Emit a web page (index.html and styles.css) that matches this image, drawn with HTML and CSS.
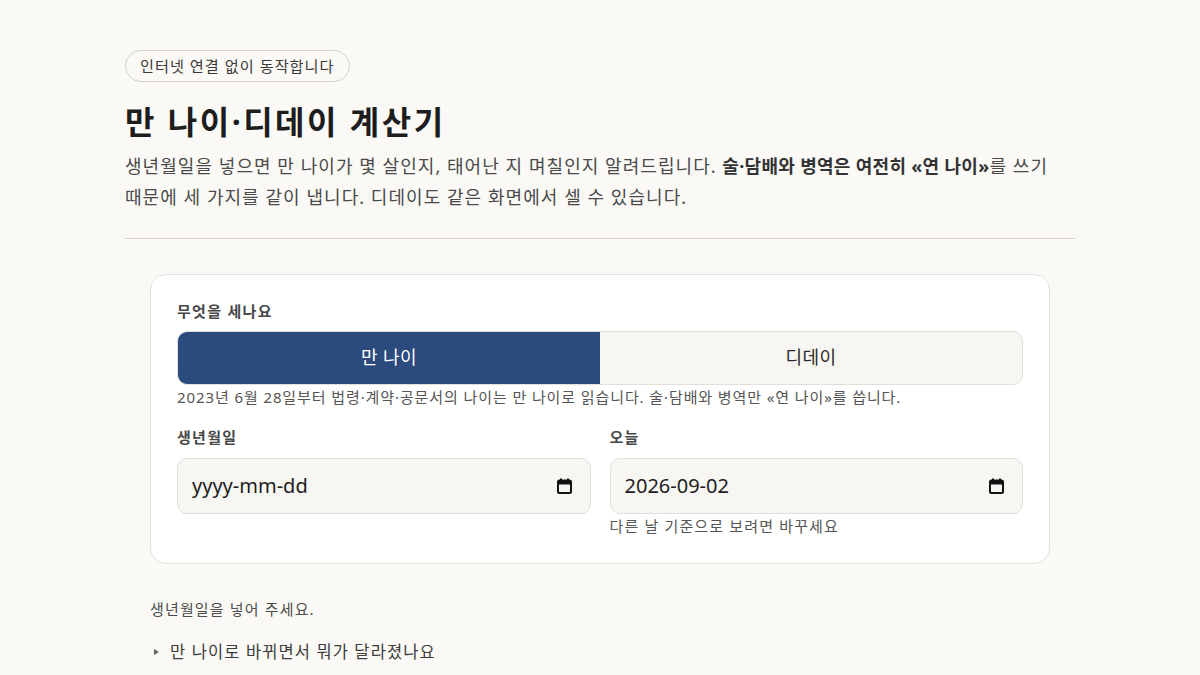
FILE: index.html
```html
<!DOCTYPE html>
<html lang="ko">
<head>
<meta charset="utf-8">
<title>만 나이·디데이 계산기</title>
<link rel="stylesheet" href="styles.css">
</head>
<body>
<main class="page">
  <header class="intro">
    <span class="badge">인터넷 연결 없이 동작합니다</span>
    <h1 class="title">만 나이·디데이 계산기</h1>
    <p class="lead">생년월일을 넣으면 만 나이가 몇 살인지, 태어난 지 며칠인지 알려드립니다. <strong>술·담배와 병역은 여전히 «연 나이»</strong>를 쓰기 때문에 세 가지를 같이 냅니다. 디데이도 같은 화면에서 셀 수 있습니다.</p>
  </header>
  <hr class="rule">
  <section class="card">
    <div class="field-label">무엇을 세나요</div>
    <div class="toggle">
      <button class="seg seg-active" type="button">만 나이</button>
      <button class="seg" type="button">디데이</button>
    </div>
    <p class="note">2023년 6월 28일부터 법령·계약·공문서의 나이는 만 나이로 읽습니다. 술·담배와 병역만 «연 나이»를 씁니다.</p>
    <div class="fields">
      <div class="field">
        <div class="field-label">생년월일</div>
        <div class="date-input">
          <span class="date-text">yyyy-mm-dd</span>
          <svg class="cal" width="15" height="16" viewBox="0 0 15 16"><rect x="1" y="2.5" width="13" height="12.5" rx="1.5" fill="none" stroke="#111" stroke-width="2"/><rect x="1" y="2.5" width="13" height="4" fill="#111"/><rect x="3" y="0.5" width="2" height="3" fill="#111"/><rect x="10" y="0.5" width="2" height="3" fill="#111"/></svg>
        </div>
      </div>
      <div class="field">
        <div class="field-label">오늘</div>
        <div class="date-input">
          <span class="date-text">2026-09-02</span>
          <svg class="cal" width="15" height="16" viewBox="0 0 15 16"><rect x="1" y="2.5" width="13" height="12.5" rx="1.5" fill="none" stroke="#111" stroke-width="2"/><rect x="1" y="2.5" width="13" height="4" fill="#111"/><rect x="3" y="0.5" width="2" height="3" fill="#111"/><rect x="10" y="0.5" width="2" height="3" fill="#111"/></svg>
        </div>
        <p class="hint">다른 날 기준으로 보려면 바꾸세요</p>
      </div>
    </div>
  </section>
  <section class="result">
    <p class="result-text">생년월일을 넣어 주세요.</p>
    <details class="faq">
      <summary>만 나이로 바뀌면서 뭐가 달라졌나요</summary>
    </details>
  </section>
</main>
</body>
</html>
```

FILE: styles.css
```css
* { box-sizing: border-box; }

html, body {
  margin: 0;
  padding: 0;
  background: #faf9f6;
}

body {
  font-family: "Noto Sans", "Noto Sans CJK KR", sans-serif;
  color: #2a2a2a;
  word-break: keep-all;
}

.page {
  max-width: 950px;
  margin: 0 auto;
  padding-top: 50px;
}

.badge {
  display: inline-block;
  padding: 5px 14px 5px 14px;
  border: 1px solid #d6d2ca;
  border-radius: 999px;
  font-size: 15.2px;
  line-height: 20px;
  letter-spacing: 1px;
  color: #3a3a3a;
}

.title {
  margin: 19px 0 8px;
  font-size: 32px;
  line-height: 1.3;
  font-weight: 700;
  letter-spacing: 2.5px;
  color: #1d1d1d;
}

.lead {
  margin: 0;
  font-size: 18px;
  line-height: 1.72;
  letter-spacing: 1.05px;
  color: #4a4a4a;
}

.lead strong {
  color: #333;
  font-weight: 700;
  letter-spacing: 0.3px;
}

.rule {
  border: 0;
  height: 1px;
  background: #d9d5cd;
  margin: 25px 0 35px;
}

.card {
  max-width: 900px;
  margin: 0 auto;
  background: #fff;
  border: 1px solid #e6e2da;
  border-radius: 16px;
  padding: 26px 26px 26px;
}

.field-label {
  font-size: 15px;
  line-height: 21px;
  font-weight: 700;
  letter-spacing: 1.3px;
  color: #474747;
}

.toggle {
  display: flex;
  margin-top: 9px;
  border: 1px solid #e3dfd6;
  border-radius: 10px;
  background: #f8f6f2;
  overflow: hidden;
}

.seg {
  flex: 1;
  border: 0;
  background: transparent;
  padding: 13px 0 14px;
  font-family: inherit;
  font-size: 18px;
  line-height: 25px;
  letter-spacing: 0.4px;
  color: #2a2a2a;
}

.seg-active {
  background: #2b4a7e;
  color: #fff;
}

.note {
  margin: 1px 0 0;
  font-size: 15px;
  line-height: 22px;
  letter-spacing: 0.9px;
  color: #555;
}

.fields {
  display: grid;
  grid-template-columns: 1fr 1fr;
  gap: 19px;
  margin-top: 19px;
}

.date-input {
  display: flex;
  align-items: center;
  justify-content: space-between;
  margin-top: 10px;
  height: 56px;
  padding: 0 18px 0 14px;
  background: #f8f6f2;
  border: 1px solid #e3dfd6;
  border-radius: 10px;
}

.date-text {
  font-size: 20px;
  color: #1d1d1d;
}

.cal {
  display: block;
}

.hint {
  margin: 1px 0 0;
  font-size: 15px;
  line-height: 22px;
  letter-spacing: 1.15px;
  color: #555;
}

.result {
  max-width: 900px;
  margin: 0 auto;
  padding-top: 33px;
}

.result-text {
  margin: 0;
  font-size: 15px;
  line-height: 24px;
  letter-spacing: 1.15px;
  color: #4d4d4d;
}

.faq {
  margin-top: 19px;
}

.faq summary {
  list-style: none;
  font-size: 16.5px;
  line-height: 24px;
  letter-spacing: 1.1px;
  color: #3d3d3d;
  display: flex;
  align-items: center;
}

.faq summary::-webkit-details-marker { display: none; }

.faq summary::before {
  content: "";
  width: 0;
  height: 0;
  border-top: 3.5px solid transparent;
  border-bottom: 3.5px solid transparent;
  border-left: 5px solid #666;
  margin: 0 11px 0 4px;
}
```
